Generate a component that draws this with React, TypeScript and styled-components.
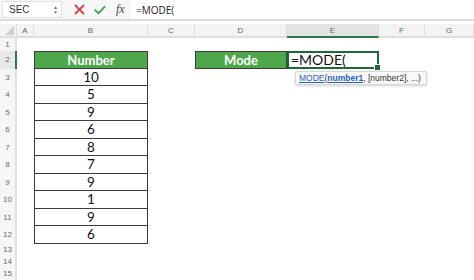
import React from "react";
import styled, { createGlobalStyle, css } from "styled-components";

const Global = createGlobalStyle`
  html, body { margin: 0; padding: 0; background: #fff; }
  body { font-family: "Lato", "Open Sans", sans-serif; width: 474px; height: 280px; overflow: hidden; }
`;

const Page = styled.div`
  width: 474px;
  height: 280px;
  display: flex;
  flex-direction: column;
  background: #fff;
`;

const FormulaBar = styled.div`
  height: 21px;
  display: flex;
  align-items: center;
  background: #f7f7f7;
  border-bottom: 2px solid #dcdcdc;
  padding: 0 0 0 2px;
  box-sizing: border-box;
`;

const NameBox = styled.div`
  width: 60px;
  height: 17px;
  box-sizing: border-box;
  background: #fff;
  border: 1px solid #e2e2e2;
  display: flex;
  align-items: center;
  justify-content: space-between;
  padding: 0 3px 0 6px;
  font-family: "Liberation Sans", Arial, sans-serif;
  font-size: 10px;
  color: #333;
`;

const Spinner = styled.div`
  display: flex;
  flex-direction: column;
  font-size: 5px;
  line-height: 5px;
  color: #777;
`;

const IconGroup = styled.div`
  display: flex;
  align-items: center;
  gap: 9px;
  padding-left: 12px;
  width: 69px;
  box-sizing: border-box;
`;

const Fx = styled.span`
  font-family: "Liberation Serif", "Times New Roman", serif;
  font-style: italic;
  font-size: 12px;
  color: #444;
  margin-left: 1px;
`;

const FormulaInput = styled.div`
  flex: 1;
  height: 19px;
  display: flex;
  align-items: center;
  background: #fff;
  padding-left: 5px;
  font-family: "Open Sans", "Lato", sans-serif;
  font-size: 10px;
  color: #222;
`;

const Spacer = styled.div`
  height: 3px;
`;

const Sheet = styled.div`
  display: grid;
  grid-template-columns: 17px 17px 114px 47px 92px 92px 46px 49px;
  grid-template-rows: 14px 13px repeat(11, 17.5px) 12px 12px 12px;
`;

const ColHead = styled.div<{ $active?: boolean; $corner?: boolean }>`
  background: ${(p) => (p.$active ? "#e4e4e4" : "#f3f3f3")};
  border-right: 1px solid #dedede;
  border-bottom: 2px solid ${(p) => (p.$active ? "#2a7a43" : "#dedede")};
  box-sizing: border-box;
  display: flex;
  align-items: center;
  justify-content: center;
  font-family: "Liberation Sans", Arial, sans-serif;
  font-size: 8px;
  color: #666;
  position: relative;
  overflow: hidden;
  ${(p) =>
    p.$corner &&
    css`
      &::after {
        content: "";
        position: absolute;
        right: 2px;
        bottom: 1px;
        border-left: 9px solid transparent;
        border-bottom: 9px solid #d0d0d0;
      }
    `}
`;

const RowHead = styled.div<{ $active?: boolean }>`
  background: ${(p) => (p.$active ? "#e8e8e8" : "#f6f6f6")};
  border-right: 2px solid ${(p) => (p.$active ? "#2a7a43" : "#e0e0e0")};
  box-sizing: border-box;
  display: flex;
  align-items: center;
  justify-content: center;
  font-family: "Liberation Sans", Arial, sans-serif;
  font-size: 8px;
  color: #6a6a6a;
`;

const Cell = styled.div<{ $boxed?: boolean; $top?: boolean; $head?: boolean }>`
  box-sizing: border-box;
  display: flex;
  align-items: center;
  justify-content: center;
  font-family: "Lato", "Open Sans", sans-serif;
  font-size: 13.5px;
  color: #111;
  ${(p) =>
    p.$boxed &&
    css`
      border-left: 1px solid #3c3c3c;
      border-right: 1px solid #3c3c3c;
      border-bottom: 1px solid #3c3c3c;
    `}
  ${(p) =>
    p.$top &&
    css`
      border-top: 1px solid #3c3c3c;
    `}
  ${(p) =>
    p.$head &&
    css`
      background: #4ea84b;
      color: #fff;
      font-weight: 700;
      font-size: 13px;
    `}
`;

const ActiveCell = styled.div`
  position: relative;
  box-sizing: border-box;
  border: 2px solid #1f6b38;
  display: flex;
  align-items: center;
  padding-left: 2px;
  font-family: "Lato", "Open Sans", sans-serif;
  font-size: 14px;
  color: #111;
`;

const Handle = styled.span`
  position: absolute;
  right: -4px;
  bottom: -4px;
  width: 5px;
  height: 5px;
  background: #1f6b38;
  border: 1px solid #fff;
`;

const Tooltip = styled.div`
  position: absolute;
  left: 6px;
  top: 18px;
  z-index: 2;
  white-space: nowrap;
  background: #f8f8f8;
  border: 1px solid #d6d6d6;
  border-radius: 2px;
  box-shadow: 0 1px 3px rgba(0, 0, 0, 0.18);
  padding: 1px 5px 1px 3px;
  font-family: "Liberation Sans", Arial, sans-serif;
  font-size: 8.5px;
  line-height: 10px;
  color: #333;
`;

const Link = styled.span<{ $bold?: boolean }>`
  color: #2a63c2;
  text-decoration: underline;
  font-weight: ${(p) => (p.$bold ? 700 : 400)};
`;

const numbers = ["10", "5", "9", "6", "8", "7", "9", "1", "9", "6"];
const cols = ["A", "B", "C", "D", "E", "F", "G"];

const XIcon = () => (
  <svg width="11" height="11" viewBox="0 0 11 11">
    <path d="M1.5 1.5 L9.5 9.5 M9.5 1.5 L1.5 9.5" stroke="#d9434a" strokeWidth="1.8" strokeLinecap="round" />
  </svg>
);

const CheckIcon = () => (
  <svg width="12" height="10" viewBox="0 0 12 10">
    <path d="M1.2 5.2 L4.4 8.4 L10.8 1.6" stroke="#3ea356" strokeWidth="1.8" fill="none" strokeLinecap="round" strokeLinejoin="round" />
  </svg>
);

export default function App() {
  const rows: React.ReactNode[] = [];
  for (let r = 1; r <= 15; r++) {
    rows.push(
      <RowHead key={`h${r}`} $active={r === 2}>
        {r}
      </RowHead>
    );
    for (let c = 0; c < 7; c++) {
      const key = `c${r}-${c}`;
      if (c === 1 && r >= 2 && r <= 12) {
        rows.push(
          <Cell key={key} $boxed $top={r === 2} $head={r === 2}>
            {r === 2 ? "Number" : numbers[r - 3]}
          </Cell>
        );
      } else if (r === 2 && c === 3) {
        rows.push(
          <Cell key={key} $boxed $top $head>
            Mode
          </Cell>
        );
      } else if (r === 2 && c === 4) {
        rows.push(
          <ActiveCell key={key}>
            =MODE(
            <Handle />
            <Tooltip>
              <Link>MODE</Link>(<Link $bold>number1</Link>, [number2], ...)
            </Tooltip>
          </ActiveCell>
        );
      } else {
        rows.push(<Cell key={key} />);
      }
    }
  }

  return (
    <Page>
      <Global />
      <FormulaBar>
        <NameBox>
          SEC
          <Spinner>
            <span>▲</span>
            <span>▼</span>
          </Spinner>
        </NameBox>
        <IconGroup>
          <XIcon />
          <CheckIcon />
          <Fx>fx</Fx>
        </IconGroup>
        <FormulaInput>=MODE(</FormulaInput>
      </FormulaBar>
      <Spacer />
      <Sheet>
        <ColHead $corner />
        {cols.map((c) => (
          <ColHead key={c} $active={c === "E"}>
            {c}
          </ColHead>
        ))}
        {rows}
      </Sheet>
    </Page>
  );
}
